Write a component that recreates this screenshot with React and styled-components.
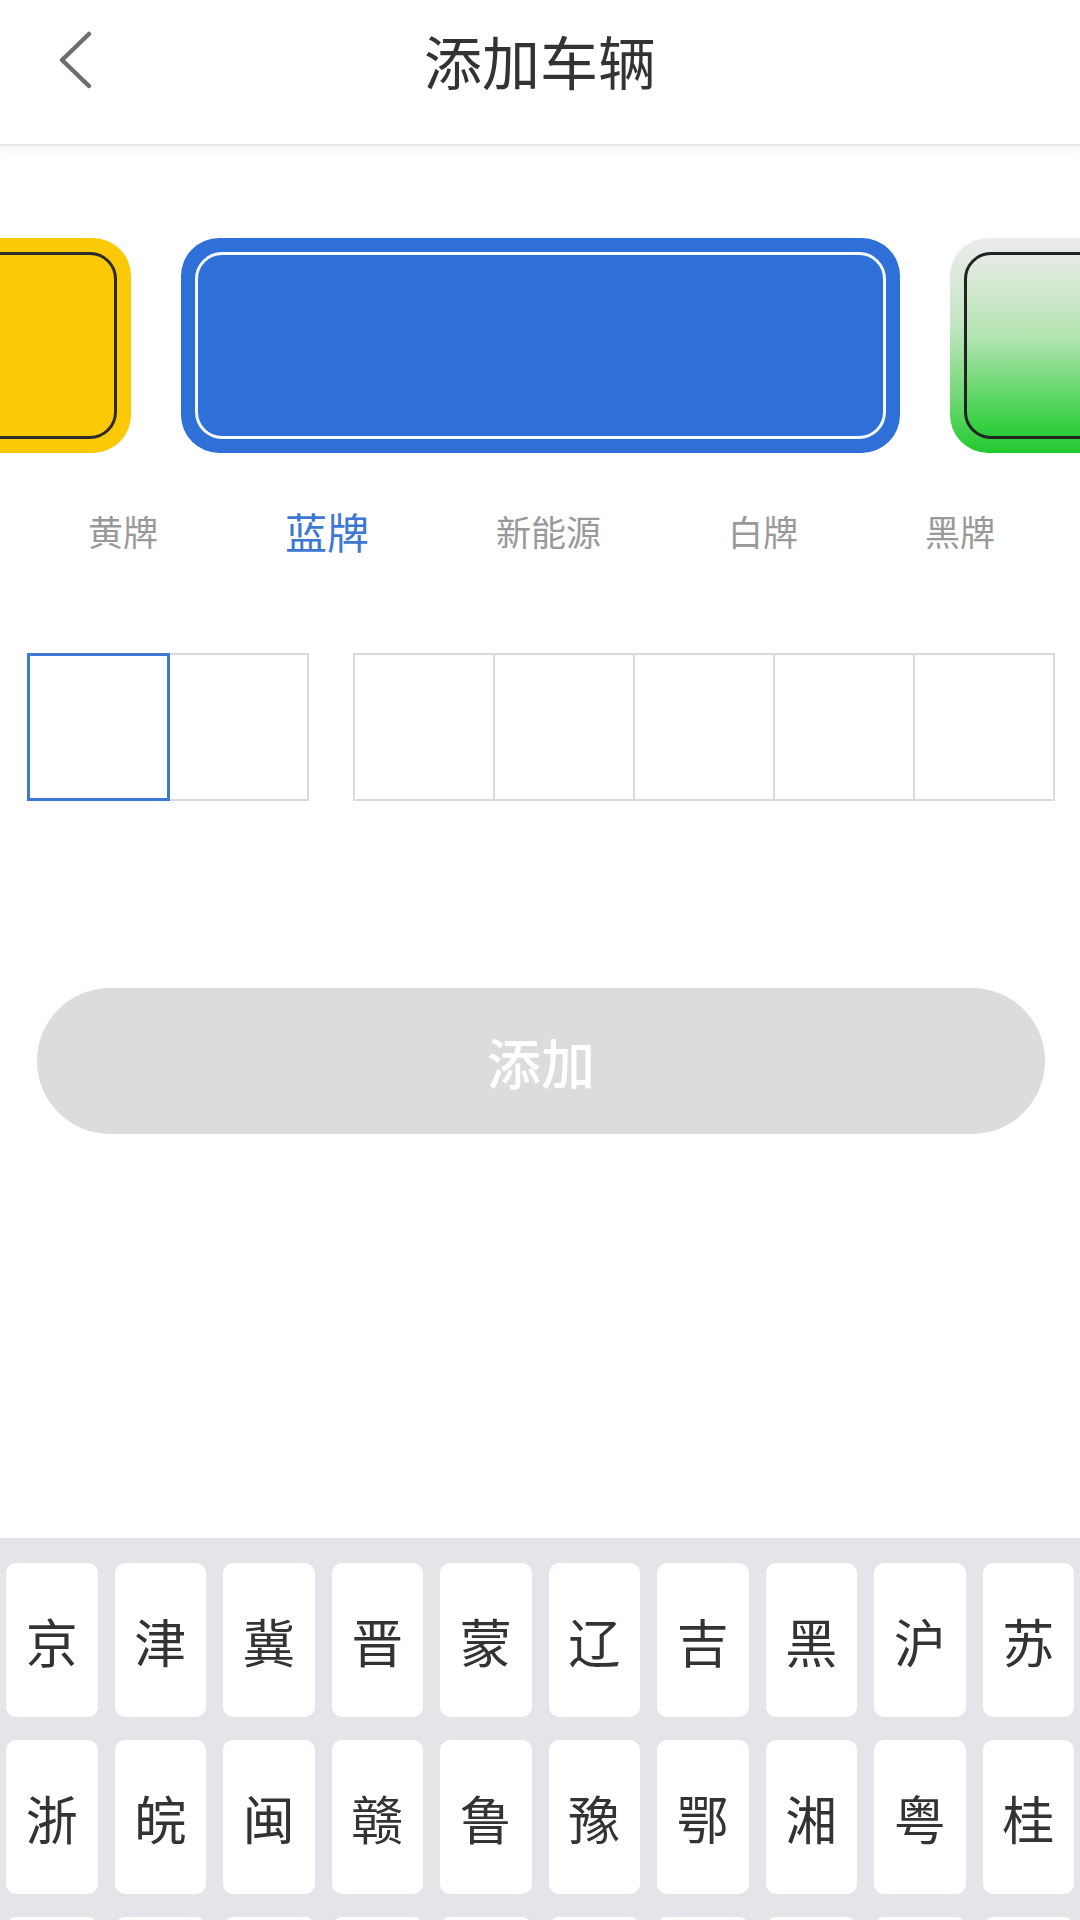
import React, { useState } from 'react';
import styled, { createGlobalStyle } from 'styled-components';

const GlobalStyle = createGlobalStyle`
  * {
    box-sizing: border-box;
  }

  html, body {
    margin: 0;
    padding: 0;
    background: #ffffff;
    font-family: "Noto Sans CJK SC", "Noto Sans", sans-serif;
  }
`;

const Page = styled.div`
  display: flex;
  flex-direction: column;
  height: 100vh;
  width: 100%;
  overflow: hidden;
  background: #ffffff;
`;

const Header = styled.header`
  flex-shrink: 0;
  display: grid;
  grid-template-columns: 1fr auto 1fr;
  align-items: center;
  height: 146px;
  padding: 0 56px 24px 56px;
  border-bottom: 2px solid #e6e6e6;
  box-shadow: 0 6px 14px rgba(0, 0, 0, 0.04);
  position: relative;
  z-index: 1;
`;

const BackButton = styled.button`
  justify-self: start;
  display: flex;
  align-items: center;
  justify-content: center;
  width: 40px;
  height: 64px;
  padding: 0;
  border: none;
  background: transparent;
  cursor: pointer;
`;

const Title = styled.h1`
  margin: 0;
  font-size: 58px;
  font-weight: 400;
  line-height: 1;
  color: #333333;
  letter-spacing: 0;
`;

// plate carousel
const PlateStrip = styled.div`
  flex-shrink: 0;
  display: flex;
  justify-content: center;
  gap: 50px;
  margin-top: 92px;
  overflow: hidden;
`;

const plateSkins = {
  yellow: {
    bg: '#fcc906',
    line: '#2b2b2b',
  },
  blue: {
    bg: '#2f70d8',
    line: '#f4f8ff',
  },
  green: {
    bg: 'linear-gradient(180deg, #ececec 0%, #c4e6c4 40%, #6fd872 75%, #1fca2e 100%)',
    line: '#232323',
  },
};

const Plate = styled.div`
  flex-shrink: 0;
  width: 719px;
  height: 215px;
  padding: 14px;
  border-radius: 38px;
  background: ${props => plateSkins[props.skin].bg};
`;

const PlateInner = styled.div`
  width: 100%;
  height: 100%;
  border-radius: 27px;
  border: 3px solid ${props => plateSkins[props.skin].line};
  background: ${props => (props.skin === 'green'
    ? 'linear-gradient(180deg, #e6ebe4 0%, #b4e4b2 45%, #5ad662 80%, #28cc36 100%)'
    : 'transparent')};
`;

const TypeRow = styled.div`
  flex-shrink: 0;
  display: flex;
  justify-content: space-between;
  align-items: center;
  height: 44px;
  margin-top: 56px;
  padding: 0 85px 0 88px;
`;

const TypeLabel = styled.span`
  font-size: ${props => (props.active ? '42px' : '35px')};
  line-height: 44px;
  color: ${props => (props.active ? '#3d77d3' : '#999999')};
  cursor: pointer;
  white-space: nowrap;
`;

// plate number cells
const CellRow = styled.div`
  flex-shrink: 0;
  display: flex;
  gap: 44px;
  height: 148px;
  margin-top: 100px;
  padding: 0 25px 0 27px;
`;

const CellGroup = styled.div`
  flex: ${props => props.count};
  display: flex;
  padding-left: 2px;
`;

const Cell = styled.div`
  flex: 1;
  margin-left: -2px;
  border: ${props => (props.active ? '3px solid #3f78d3' : '2px solid #dadada')};
  background: #ffffff;
  position: relative;
  z-index: ${props => (props.active ? 1 : 0)};
`;

const AddButton = styled.button`
  flex-shrink: 0;
  height: 146px;
  margin: 187px 35px 0 37px;
  border: none;
  border-radius: 73px;
  background: #dcdcdc;
  color: #ffffff;
  font-family: "Noto Sans CJK SC", "Noto Sans", sans-serif;
  font-size: 54px;
  font-weight: 500;
  cursor: default;
`;

// province keyboard
const Keyboard = styled.div`
  flex-shrink: 0;
  margin-top: auto;
  height: 382px;
  padding: 25px 6px 0;
  background: #e4e5e9;
  display: flex;
  flex-direction: column;
  gap: 23px;
  overflow: hidden;
`;

const KeyRow = styled.div`
  flex-shrink: 0;
  display: grid;
  grid-template-columns: repeat(10, 1fr);
  gap: 17px;
`;

const Key = styled.button`
  height: 154px;
  padding: 0;
  border: none;
  border-radius: 10px;
  background: #ffffff;
  color: #333333;
  font-family: "Noto Sans CJK SC", "Noto Sans", sans-serif;
  font-size: 52px;
  font-weight: 400;
  cursor: pointer;
`;

const plateTypes = ['黄牌', '蓝牌', '新能源', '白牌', '黑牌'];

const provinces = [
  ['京', '津', '冀', '晋', '蒙', '辽', '吉', '黑', '沪', '苏'],
  ['浙', '皖', '闽', '赣', '鲁', '豫', '鄂', '湘', '粤', '桂'],
  ['琼', '渝', '川', '贵', '云', '藏', '陕', '甘', '青', '宁'],
];

function BackIcon() {
  return (
    <svg width="40" height="64" viewBox="0 0 40 64">
      <polyline
        points="33,6 6,32 33,58"
        fill="none"
        stroke="#6e6e6e"
        strokeWidth="4.5"
        strokeLinecap="round"
        strokeLinejoin="round"
      />
    </svg>
  );
}

export default function App() {
  const [type, setType] = useState(1);
  const [chars, setChars] = useState(Array(7).fill(''));
  const active = chars.findIndex(c => c === '');

  const pressKey = (ch) => {
    if (active === -1) return;
    setChars(prev => prev.map((c, i) => (i === active ? ch : c)));
  };

  return (
    <>
      <GlobalStyle />
      <Page>
        <Header>
          <BackButton type="button" aria-label="返回">
            <BackIcon />
          </BackButton>
          <Title>添加车辆</Title>
        </Header>

        <PlateStrip>
          <Plate skin="yellow"><PlateInner skin="yellow" /></Plate>
          <Plate skin="blue"><PlateInner skin="blue" /></Plate>
          <Plate skin="green"><PlateInner skin="green" /></Plate>
        </PlateStrip>

        <TypeRow>
          {plateTypes.map((t, i) => (
            <TypeLabel key={t} active={i === type} onClick={() => setType(i)}>
              {t}
            </TypeLabel>
          ))}
        </TypeRow>

        <CellRow>
          <CellGroup count={2}>
            {chars.slice(0, 2).map((c, i) => (
              <Cell key={i} active={i === active}>{c}</Cell>
            ))}
          </CellGroup>
          <CellGroup count={5}>
            {chars.slice(2).map((c, i) => (
              <Cell key={i + 2} active={i + 2 === active}>{c}</Cell>
            ))}
          </CellGroup>
        </CellRow>

        <AddButton type="button">添加</AddButton>

        <Keyboard>
          {provinces.map((row, r) => (
            <KeyRow key={r}>
              {row.map(p => (
                <Key key={p} type="button" onClick={() => pressKey(p)}>{p}</Key>
              ))}
            </KeyRow>
          ))}
        </Keyboard>
      </Page>
    </>
  );
}
